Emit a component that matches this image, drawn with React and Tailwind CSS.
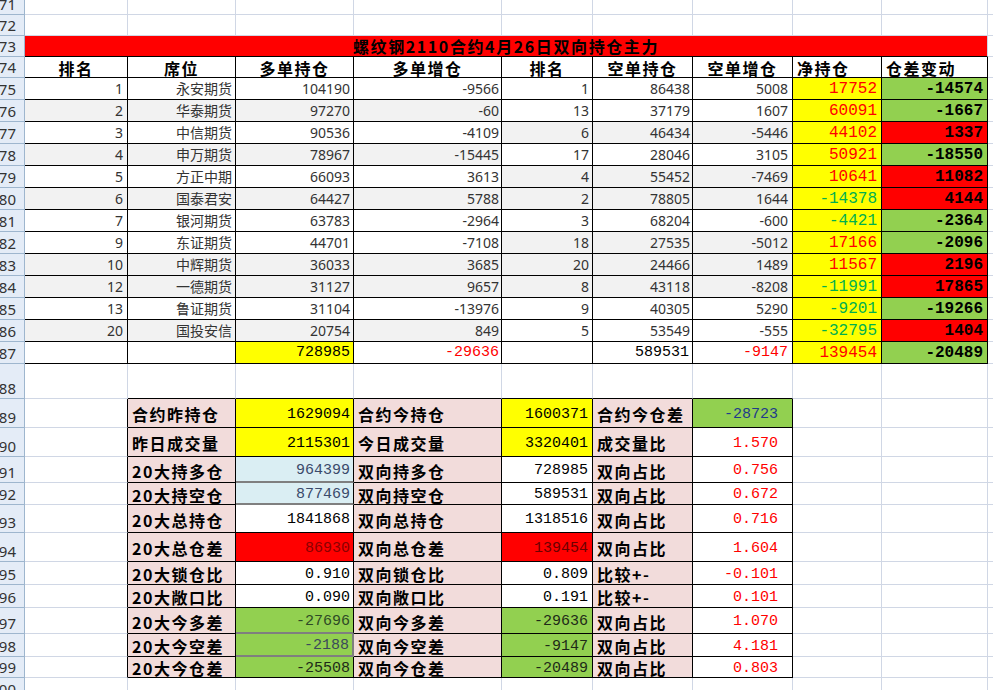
import React from "react";

const W = {
  A: "w-[103px]",
  B: "w-[108px]",
  C: "w-[118px]",
  D: "w-[148px]",
  E: "w-[91px]",
  F: "w-[100px]",
  G: "w-[100px]",
  H: "w-[89px]",
  I: "w-[106px]",
};
const COLS = [W.A, W.B, W.C, W.D, W.E, W.F, W.G, W.H, W.I];

const GRID = "border-r border-b border-r-[#d0d7e5] border-b-[#d0d7e5]";
const BLK = "border-r border-b border-r-black border-b-black";

const SANS = "font-['Noto_Sans','Noto_Sans_CJK_SC',sans-serif]";
const CJK = "font-['Noto_Sans_CJK_SC',sans-serif]";
const MONO = "font-['Liberation_Mono','Noto_Sans_CJK_SC',monospace]";

function Cell({ w, c = "", children }) {
  return (
    <div className={"box-border flex shrink-0 whitespace-nowrap " + w + " " + c}>
      {children}
    </div>
  );
}

function RH({ n }) {
  return (
    <div className="box-border flex w-[25px] shrink-0 items-end justify-end overflow-hidden border-r border-b border-r-[#9eb6ce] border-b-[#9eb6ce] bg-[#e4ecf7] pr-[8px] pb-[2px] font-['Noto_Sans',sans-serif] text-[15px] leading-none text-[#333333]">
      <span className="shrink-0">{n}</span>
    </div>
  );
}

function Row({ h, n, children }) {
  return (
    <div className={"flex " + h}>
      <RH n={n} />
      {children}
      <div className="flex-1 border-b border-b-[#d0d7e5]" />
    </div>
  );
}

function EmptyRow({ h, n }) {
  return (
    <Row h={h} n={n}>
      {COLS.map((w, i) => (
        <Cell key={i} w={w} c={GRID} />
      ))}
    </Row>
  );
}

const DATA = [
  [1, "永安期货", 104190, -9566, 1, 86438, 5008, 17752, -14574],
  [2, "华泰期货", 97270, -60, 13, 37179, 1607, 60091, -1667],
  [3, "中信期货", 90536, -4109, 6, 46434, -5446, 44102, 1337],
  [4, "申万期货", 78967, -15445, 17, 28046, 3105, 50921, -18550],
  [5, "方正中期", 66093, 3613, 4, 55452, -7469, 10641, 11082],
  [6, "国泰君安", 64427, 5788, 2, 78805, 1644, -14378, 4144],
  [7, "银河期货", 63783, -2964, 3, 68204, -600, -4421, -2364],
  [9, "东证期货", 44701, -7108, 18, 27535, -5012, 17166, -2096],
  [10, "中辉期货", 36033, 3685, 20, 24466, 1489, 11567, 2196],
  [12, "一德期货", 31127, 9657, 8, 43118, -8208, -11991, 17865],
  [13, "鲁证期货", 31104, -13976, 9, 40305, 5290, -9201, -19266],
  [20, "国投安信", 20754, 849, 5, 53549, -555, -32795, 1404],
];

const DBASE =
  BLK + " items-center justify-end text-[14px] leading-none text-[#333333] " + SANS;
const HBASE =
  BLK + " items-center justify-end pr-[4px] bg-[#ffff00] text-[16px] leading-none " + MONO;
const IBASE =
  BLK + " items-center justify-end pr-[4px] text-[16px] font-bold leading-none text-black " + MONO;

function DataRow({ n, r }) {
  const [a, name, c, d, e, f, g, h, i] = r;
  const L = a % 2 === 0 ? " bg-[#f2f2f2]" : " bg-white";
  const R = e % 2 === 0 ? " bg-[#f2f2f2]" : " bg-white";
  return (
    <Row h="h-[22px]" n={n}>
      <Cell w={W.A} c={DBASE + " pr-[4px]" + L}>{a}</Cell>
      <Cell w={W.B} c={DBASE + " pr-[3px]" + L}>{name}</Cell>
      <Cell w={W.C} c={DBASE + " pr-[3px]" + L}>{c}</Cell>
      <Cell w={W.D} c={DBASE + " pr-[2px]" + L}>{d}</Cell>
      <Cell w={W.E} c={DBASE + " pr-[3px]" + R}>{e}</Cell>
      <Cell w={W.F} c={DBASE + " pr-[2px]" + R}>{f}</Cell>
      <Cell w={W.G} c={DBASE + " pr-[4px]" + R}>{g}</Cell>
      <Cell w={W.H} c={HBASE + (h > 0 ? " text-[#ff0000]" : " text-[#00b050]")}>{h}</Cell>
      <Cell w={W.I} c={IBASE + (i > 0 ? " bg-[#ff0000]" : " bg-[#92d050]")}>{i}</Cell>
    </Row>
  );
}

const HEAD =
  BLK + " bg-white items-end pb-[1px] text-[16px] font-bold leading-none tracking-[1.5px] text-black " + CJK;

const LBL =
  BLK + " bg-[#f2dcdb] items-center pt-[2px] pl-[4px] text-[16px] font-bold leading-none tracking-[1.5px] text-black " + CJK;
const VAL = " items-center justify-end pt-[2px] text-[15px] leading-none " + MONO;

const LOWER = [
  {
    n: 89, h: "h-[29px]",
    l1: "合约昨持仓", v1: "1629094", c1: BLK + " bg-[#ffff00] text-black",
    l2: "合约今持仓", v2: "1600371", c2: BLK + " bg-[#ffff00] text-black",
    l3: "合约今仓差", v3: "-28723", c3: BLK + " bg-[#92d050] text-[#1f3a8a]",
  },
  {
    n: 90, h: "h-[29px]",
    l1: "昨日成交量", v1: "2115301", c1: BLK + " bg-[#ffff00] text-black",
    l2: "今日成交量", v2: "3320401", c2: BLK + " bg-[#ffff00] text-black",
    l3: "成交量比", v3: "1.570", c3: BLK + " bg-white text-[#ff0000]",
  },
  {
    n: 91, h: "h-[26px]",
    l1: "20大持多仓", v1: "964399", c1: "border-r border-b-2 border-r-black border-b-[#7f7f7f] bg-[#daeef3] text-[#3b4a6b]",
    l2: "双向持多仓", v2: "728985", c2: BLK + " bg-white text-black",
    l3: "双向占比", v3: "0.756", c3: BLK + " bg-white text-[#ff0000]",
  },
  {
    n: 92, h: "h-[22px]",
    l1: "20大持空仓", v1: "877469", c1: "border-r border-b-2 border-r-black border-b-[#7f7f7f] bg-[#daeef3] text-[#3b4a6b]",
    l2: "双向持空仓", v2: "589531", c2: BLK + " bg-white text-black",
    l3: "双向占比", v3: "0.672", c3: BLK + " bg-white text-[#ff0000]",
  },
  {
    n: 93, h: "h-[28px]",
    l1: "20大总持仓", v1: "1841868", c1: BLK + " bg-white text-black",
    l2: "双向总持仓", v2: "1318516", c2: BLK + " bg-white text-black",
    l3: "双向占比", v3: "0.716", c3: BLK + " bg-white text-[#ff0000]",
  },
  {
    n: 94, h: "h-[29px]",
    l1: "20大总仓差", v1: "86930", c1: BLK + " bg-[#ff0000] text-[#8b0000]",
    l2: "双向总仓差", v2: "139454", c2: BLK + " bg-[#ff0000] text-[#6b0000]",
    l3: "双向占比", v3: "1.604", c3: BLK + " bg-white text-[#ff0000]",
  },
  {
    n: 95, h: "h-[23px]",
    l1: "20大锁仓比", v1: "0.910", c1: BLK + " bg-white text-black",
    l2: "双向锁仓比", v2: "0.809", c2: BLK + " bg-white text-black",
    l3: "比较+-", v3: "-0.101", c3: BLK + " bg-white text-[#ff0000]",
  },
  {
    n: 96, h: "h-[23px]",
    l1: "20大敞口比", v1: "0.090", c1: BLK + " bg-white text-black",
    l2: "双向敞口比", v2: "0.191", c2: BLK + " bg-white text-black",
    l3: "比较+-", v3: "0.101", c3: BLK + " bg-white text-[#ff0000]",
  },
  {
    n: 97, h: "h-[26px]",
    l1: "20大今多差", v1: "-27696", c1: "border-r border-b-2 border-r-black border-b-[#7f7f7f] bg-[#92d050] text-[#2e4a26]",
    l2: "双向今多差", v2: "-29636", c2: BLK + " bg-[#92d050] text-[#1e2a18]",
    l3: "双向占比", v3: "1.070", c3: BLK + " bg-white text-[#ff0000]",
  },
  {
    n: 98, h: "h-[23px]",
    l1: "20大今空差", v1: "-2188", c1: "border-r-2 border-b-2 border-r-[#7f7f7f] border-b-[#7f7f7f] bg-[#92d050] text-[#3b4a5b]",
    l2: "双向今空差", v2: "-9147", c2: BLK + " bg-[#92d050] text-[#1e2a18]",
    l3: "双向占比", v3: "4.181", c3: BLK + " bg-white text-[#ff0000]",
  },
  {
    n: 99, h: "h-[21px]",
    l1: "20大今仓差", v1: "-25508", c1: BLK + " bg-[#92d050] text-[#1e2a18]",
    l2: "双向今仓差", v2: "-20489", c2: BLK + " bg-[#92d050] text-[#1e2a18]",
    l3: "双向占比", v3: "0.803", c3: BLK + " bg-white text-[#ff0000]",
  },
];

function LowerRow({ r }) {
  return (
    <Row h={r.h} n={r.n}>
      <Cell w={W.A} c="border-r border-b border-r-black border-b-[#d0d7e5]" />
      <Cell w={W.B} c={LBL}>{r.l1}</Cell>
      <Cell w={W.C} c={r.c1 + VAL + " pr-[3px]"}>{r.v1}</Cell>
      <Cell w={W.D} c={LBL}>{r.l2}</Cell>
      <Cell w={W.E} c={r.c2 + VAL + " pr-[4px]"}>{r.v2}</Cell>
      <Cell w={W.F} c={LBL}>{r.l3}</Cell>
      <Cell w={W.G} c={r.c3 + VAL + " pr-[14px]"}>{r.v3}</Cell>
      <Cell w={W.H} c={GRID} />
      <Cell w={W.I} c={GRID} />
    </Row>
  );
}

export default function App() {
  return (
    <div className="h-[690px] w-[993px] overflow-hidden bg-white">
      <EmptyRow h="h-[15px]" n={71} />
      <EmptyRow h="h-[21px]" n={72} />
      <Row h="h-[21px]" n={73}>
        <Cell
          w="w-[963px]"
          c={
            "border-r border-b border-r-[#d0d7e5] border-b-black bg-[#ff0000] items-center justify-center text-[16px] font-bold leading-none tracking-[1.6px] text-black " +
            CJK
          }
        >
          螺纹钢2110合约4月26日双向持仓主力
        </Cell>
      </Row>
      <Row h="h-[21px]" n={74}>
        <Cell w={W.A} c={HEAD + " justify-center"}>排名</Cell>
        <Cell w={W.B} c={HEAD + " justify-center"}>席位</Cell>
        <Cell w={W.C} c={HEAD + " justify-center"}>多单持仓</Cell>
        <Cell w={W.D} c={HEAD + " justify-center"}>多单增仓</Cell>
        <Cell w={W.E} c={HEAD + " justify-center"}>排名</Cell>
        <Cell w={W.F} c={HEAD + " justify-center"}>空单持仓</Cell>
        <Cell w={W.G} c={HEAD + " justify-center"}>空单增仓</Cell>
        <Cell w={W.H} c={HEAD + " pl-[4px]"}>净持仓</Cell>
        <Cell w={W.I} c={HEAD + " pl-[4px]"}>仓差变动</Cell>
      </Row>
      {DATA.map((r, i) => (
        <DataRow key={i} n={75 + i} r={r} />
      ))}
      <Row h="h-[22px]" n={87}>
        <Cell w={W.A} c={BLK + " bg-white"} />
        <Cell w={W.B} c={BLK + " bg-white"} />
        <Cell w={W.C} c={BLK + " bg-[#ffff00] items-center justify-end pr-[3px] text-[15px] leading-none text-black " + MONO}>728985</Cell>
        <Cell w={W.D} c={BLK + " bg-white items-center justify-end pr-[2px] text-[15px] leading-none text-[#ff0000] " + MONO}>-29636</Cell>
        <Cell w={W.E} c={BLK + " bg-white"} />
        <Cell w={W.F} c={BLK + " bg-white items-center justify-end pr-[3px] text-[15px] leading-none text-black " + MONO}>589531</Cell>
        <Cell w={W.G} c={BLK + " bg-white items-center justify-end pr-[4px] text-[15px] leading-none text-[#ff0000] " + MONO}>-9147</Cell>
        <Cell w={W.H} c={HBASE + " text-[#ff0000]"}>139454</Cell>
        <Cell w={W.I} c={IBASE + " bg-[#92d050]"}>-20489</Cell>
      </Row>
      <Row h="h-[35px]" n={88}>
        <Cell w={W.A} c={GRID} />
        <Cell w={W.B} c="border-r border-b border-r-[#d0d7e5] border-b-black" />
        <Cell w={W.C} c="border-r border-b border-r-[#d0d7e5] border-b-black" />
        <Cell w={W.D} c="border-r border-b border-r-[#d0d7e5] border-b-black" />
        <Cell w={W.E} c="border-r border-b border-r-[#d0d7e5] border-b-black" />
        <Cell w={W.F} c="border-r border-b border-r-[#d0d7e5] border-b-black" />
        <Cell w={W.G} c="border-r border-b border-r-[#d0d7e5] border-b-black" />
        <Cell w={W.H} c={GRID} />
        <Cell w={W.I} c={GRID} />
      </Row>
      {LOWER.map((r) => (
        <LowerRow key={r.n} r={r} />
      ))}
      <EmptyRow h="h-[22px]" n={100} />
    </div>
  );
}
